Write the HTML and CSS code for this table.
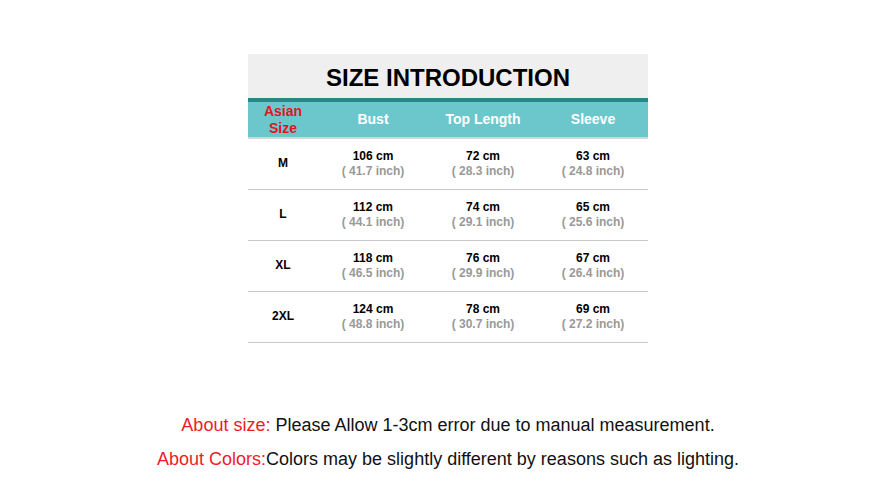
FILE: index.html
```html
<!DOCTYPE html>
<html>
<head>
<meta charset="utf-8">
<link rel="stylesheet" href="styles.css">
</head>
<body>
<div class="page">
  <div class="chart">
    <div class="title">SIZE INTRODUCTION</div>
    <div class="head">
      <div class="c c0 asian">Asian<br>Size</div>
      <div class="c">Bust</div>
      <div class="c">Top Length</div>
      <div class="c">Sleeve</div>
    </div>
    <div class="row">
      <div class="c c0">M</div>
      <div class="c"><span class="cm">106 cm</span><span class="in">( 41.7 inch)</span></div>
      <div class="c"><span class="cm">72 cm</span><span class="in">( 28.3 inch)</span></div>
      <div class="c"><span class="cm">63 cm</span><span class="in">( 24.8 inch)</span></div>
    </div>
    <div class="row">
      <div class="c c0">L</div>
      <div class="c"><span class="cm">112 cm</span><span class="in">( 44.1 inch)</span></div>
      <div class="c"><span class="cm">74 cm</span><span class="in">( 29.1 inch)</span></div>
      <div class="c"><span class="cm">65 cm</span><span class="in">( 25.6 inch)</span></div>
    </div>
    <div class="row">
      <div class="c c0">XL</div>
      <div class="c"><span class="cm">118 cm</span><span class="in">( 46.5 inch)</span></div>
      <div class="c"><span class="cm">76 cm</span><span class="in">( 29.9 inch)</span></div>
      <div class="c"><span class="cm">67 cm</span><span class="in">( 26.4 inch)</span></div>
    </div>
    <div class="row">
      <div class="c c0">2XL</div>
      <div class="c"><span class="cm">124 cm</span><span class="in">( 48.8 inch)</span></div>
      <div class="c"><span class="cm">78 cm</span><span class="in">( 30.7 inch)</span></div>
      <div class="c"><span class="cm">69 cm</span><span class="in">( 27.2 inch)</span></div>
    </div>
  </div>
  <div class="notes">
    <p><span class="red">About size:</span> Please Allow 1-3cm error due to manual measurement.</p>
    <p><span class="red">About Colors:</span>Colors may be slightly different by reasons such as lighting.</p>
  </div>
</div>
</body>
</html>
```
FILE: styles.css
```css
* { box-sizing: border-box; }
html, body { margin: 0; padding: 0; background: #fff; }
body { font-family: "Liberation Sans", Arial, sans-serif; }
.page { width: 887px; height: 487px; display: flex; flex-direction: column; align-items: center; padding-top: 54px; padding-left: 9px; }
.chart { width: 400px; }
.title { height: 48px; background: #efefef; border-bottom: 4px solid #2c8486; text-align: center; font-weight: bold; font-size: 24px; line-height: 47px; color: #000; }
.head { display: flex; height: 37px; background: #6cc7cc; border-bottom: 2px solid #d3d7d7; color: #fff; font-weight: bold; font-size: 14px; }
.c { flex: 0 0 110px; display: flex; flex-direction: column; align-items: center; justify-content: center; text-align: center; }
.c0 { flex: 0 0 70px; }
.head .c { padding-bottom: 2px; }
.head .asian { color: #e3141b; line-height: 17px; font-size: 14px; padding-bottom: 0; }
.row { display: flex; height: 51px; border-bottom: 1px solid #c8c8c8; font-weight: bold; font-size: 12px; color: #000; }
.row .c { padding-bottom: 1px; }
.row .c0 { padding-bottom: 2px; }
.cm { line-height: 15px; }
.in { color: #999; line-height: 15px; }
.notes { margin-top: 65px; text-align: center; font-size: 18px; color: #111; }
.notes p { margin: 0; line-height: 34px; }
.red { color: #ee1c24; }
```
